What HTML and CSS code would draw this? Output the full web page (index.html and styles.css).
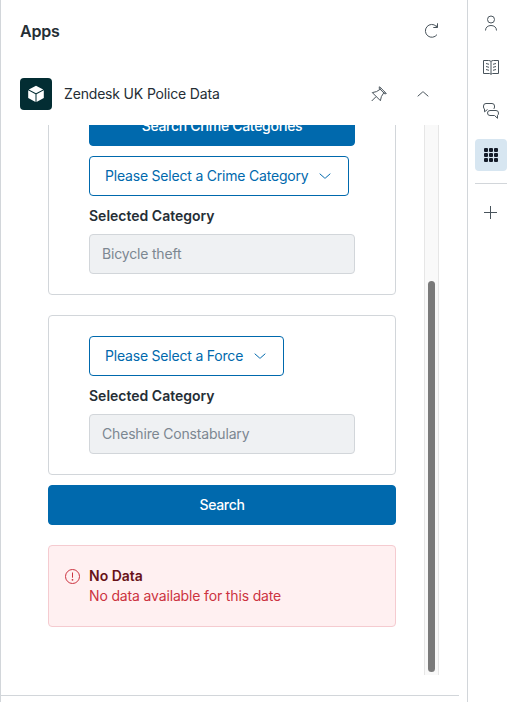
FILE: index.html

```html
<!DOCTYPE html>
<html lang="en">
<head>
<meta charset="utf-8">
<title>Apps</title>
<link rel="stylesheet" href="styles.css">
</head>
<body>
<main class="panel">
  <header class="panel-header">
    <h1 class="panel-title">Apps</h1>
    <svg class="icon" width="16" height="16" viewBox="0 0 16 16"><path d="M14 11.6A6.4 6.4 0 1 1 13.2 3.2L14.3 4.3M14.5.3V4.5H10.3M12.8 3.6 14 2.8"/></svg>
  </header>
  <section class="app-header">
    <span class="app-logo">
      <svg width="16" height="18" viewBox="0 0 16 18"><path d="M8 .7 15.2 4.5 8 8.3.8 4.5zM.2 5.3 7.5 9.2V17L.2 13.1zM15.8 5.3 8.5 9.2V17L15.8 13.1z"/></svg>
    </span>
    <h2 class="app-name">Zendesk UK Police Data</h2>
    <svg class="icon pin" width="16" height="16" viewBox="0 0 16 16"><path d="M8.5.7 15.3 7.5M10.3 2.5 5.5 5.6 1.3 6.6 9.4 14.7 10.4 10.5 13.5 5.7M8.5.7 8.1 2.2 13.8 7.9 15.3 7.5M5 10.7.7 15"/></svg>
    <svg class="icon collapse" width="16" height="16" viewBox="0 0 16 16"><path d="M2.7 10.3 7.6 6Q8 5.6 8.4 6L13.3 10.3"/></svg>
  </section>
  <div class="app-frame">
    <div class="app-content">
      <section class="card">
        <button class="button primary">Search Crime Categories</button>
        <button class="button select category">Please Select a Crime Category
          <svg width="16" height="16" viewBox="0 0 16 16"><path d="M2.7 5.7 7.6 10Q8 10.4 8.4 10L13.3 5.7"/></svg>
        </button>
        <div class="label">Selected Category</div>
        <div class="input">Bicycle theft</div>
      </section>
      <section class="card">
        <button class="button select force">Please Select a Force
          <svg width="16" height="16" viewBox="0 0 16 16"><path d="M2.7 5.7 7.6 10Q8 10.4 8.4 10L13.3 5.7"/></svg>
        </button>
        <div class="label">Selected Category</div>
        <div class="input">Cheshire Constabulary</div>
      </section>
      <button class="button primary search">Search</button>
      <section class="alert">
        <svg width="16" height="16" viewBox="0 0 16 16"><circle cx="7.5" cy="8.500" r="7"/><path d="M7.500 4.500v5.200"/><circle class="dot" cx="7.500" cy="11.800" r=".9"/></svg>
        <div>
          <h3 class="alert-title">No Data</h3>
          <p class="alert-text">No data available for this date</p>
        </div>
      </section>
    </div>
    <div class="scroll-track"><div class="scroll-thumb"></div></div>
  </div>
  <div class="panel-end"></div>
</main>
<nav class="rail">
  <span class="rail-item"><svg class="icon" width="16" height="16" viewBox="0 0 16 16"><circle cx="8" cy="4.5" r="3.5"/><path d="M2.5 15.5C2.5 12.2 5 10.5 8 10.5S13.5 12.2 13.5 15.5"/></svg></span>
  <span class="rail-item"><svg class="icon" width="16" height="16" viewBox="0 0 16 16"><path d="M8 2.5Q7.3 1.500 5.500 1.500H.5V14.500H6.500L8 15.300 9.500 14.500H15.500V1.500H10.500Q8.700 1.500 8 2.500V15M3 4.500 6 5.300M3 7.500 6 8.300M3 10.500 6 11.300M13 4.500 10 5.300M13 7.500 10 8.300M13 10.500 10 11.300"/></svg></span>
  <span class="rail-item"><svg class="icon" width="16" height="16" viewBox="0 0 16 16"><path d="M4.500 6.500 1.500 8.800V6Q.5 5.300.5 4V3Q.5.500 3 .5H9Q11.500.5 11.500 3V4Q11.500 5.500 10.500 6M4.500 10Q4.500 7.500 7 7.500H13Q15.500 7.500 15.500 10 15.500 11.800 14.500 12.300V15.300L11.500 12.500H7Q4.500 12.500 4.500 10Z"/></svg></span>
  <span class="rail-item active"><svg width="14" height="14" viewBox="0 0 14 14"><rect width="4" height="4" rx="1"/><rect x="5" width="4" height="4" rx="1"/><rect x="10" width="4" height="4" rx="1"/><rect y="5" width="4" height="4" rx="1"/><rect x="5" y="5" width="4" height="4" rx="1"/><rect x="10" y="5" width="4" height="4" rx="1"/><rect y="10" width="4" height="4" rx="1"/><rect x="5" y="10" width="4" height="4" rx="1"/><rect x="10" y="10" width="4" height="4" rx="1"/></svg></span>
  <span class="rail-divider"></span>
  <span class="rail-item"><svg class="icon" width="16" height="16" viewBox="0 0 16 16"><path d="M7.5 2V15M1 8.5H14"/></svg></span>
</nav>
</body>
</html>
```

FILE: styles.css

```css
* {
  box-sizing: border-box;
}

body {
  margin: 0;
  width: 511px;
  height: 702px;
  overflow: hidden;
  display: flex;
  background: #fff;
  color: #252e35;
  font: 14px/20px Inter, "Liberation Sans", sans-serif;
}

h1, h2, h3, p {
  margin: 0;
}

svg {
  display: block;
  flex: none;
}

.icon {
  fill: none;
  stroke: #49545c;
  stroke-width: 1;
}

.panel {
  width: 468px;
  border-left: 1px solid #d2d6da;
  border-right: 1px solid #d2d6da;
  display: flex;
  flex-direction: column;
}

.panel-header {
  height: 62px;
  padding: 0 28px 0 19px;
  display: flex;
  align-items: center;
  justify-content: space-between;
}

.panel-title {
  font-size: 16px;
  font-weight: 600;
  letter-spacing: -0.2px;
}

.app-header {
  height: 63px;
  padding: 16px 36px 0 19px;
  display: flex;
  align-items: flex-start;
  line-height: 32px;
}

.app-logo {
  width: 32px;
  height: 32px;
  border-radius: 4px;
  background: #032d33;
  display: flex;
  align-items: center;
  justify-content: center;
}

.app-logo svg {
  fill: #fff;
}

.app-name {
  flex: 1;
  margin-left: 12px;
  font-size: 14px;
  font-weight: 400;
  letter-spacing: -0.17px;
}

.pin {
  margin: 8px 28px 0 0;
}

.collapse {
  margin-top: 8px;
}

.app-frame {
  height: 550px;
  width: 438px;
  overflow: hidden;
  display: flex;
  justify-content: space-between;
}

.app-content {
  width: 348px;
  margin: -40px 0 0 47px;
}

.card {
  border: 1px solid #d2d6da;
  border-radius: 4px;
  padding: 20px 40px;
  margin-bottom: 20px;
}

.button {
  width: 100%;
  height: 40px;
  border: 1px solid #0069ad;
  border-radius: 4px;
  padding: 0 15px;
  font: inherit;
  letter-spacing: -0.2px;
  white-space: nowrap;
  display: flex;
  align-items: center;
  justify-content: center;
}

.primary {
  background: #0069ad;
  color: #fff;
  font-weight: 500;
  letter-spacing: -0.3px;
}

.select {
  background: #fff;
  color: #0069ad;
  justify-content: space-between;
}

.select svg {
  fill: none;
  stroke: #0069ad;
}

.category {
  width: 260px;
  margin-top: 10px;
}

.force {
  width: 195px;
}

.label {
  margin: 10px 0 8px;
  font-weight: 600;
}

.input {
  height: 40px;
  border: 1px solid #d2d6da;
  border-radius: 4px;
  padding: 9px 12px;
  background: #eff1f3;
  color: #7c8791;
  letter-spacing: -0.18px;
}

.search {
  margin-top: -10px;
}

.alert {
  height: 82px;
  margin-top: 20px;
  border: 1px solid #f5cbd0;
  border-radius: 4px;
  padding: 20px 16px;
  background: #fff0f1;
  color: #cc3340;
  display: flex;
  gap: 8px;
}

.alert svg {
  margin-top: 2px;
  fill: none;
  stroke: #cc3340;
}

.alert .dot {
  fill: #cc3340;
  stroke: none;
}

.alert-title {
  font-size: 14px;
  font-weight: 600;
  color: #681219;
}

.alert-text {
  letter-spacing: -0.15px;
}

.scroll-track {
  width: 15px;
  border: 1px solid #e6e6e6;
  border-width: 0 1px;
  padding: 156px 3px 3px;
  background: #f9f9f9;
}

.scroll-thumb {
  width: 7px;
  height: 391px;
  border-radius: 4px;
  background: #7a7a7a;
}

.panel-end {
  width: 458px;
  margin-top: 20px;
  border-top: 1px solid #d2d6da;
}

.rail {
  width: 43px;
  padding: 7px 4px 0 7px;
  display: flex;
  flex-direction: column;
  gap: 12px;
}

.rail-item {
  height: 32px;
  border-radius: 4px;
  display: flex;
  align-items: center;
  justify-content: center;
}

.active {
  background: #d7e6f1;
}

.active svg {
  fill: #141c29;
}

.rail-divider {
  height: 1px;
  background: #d2d6da;
}
```
